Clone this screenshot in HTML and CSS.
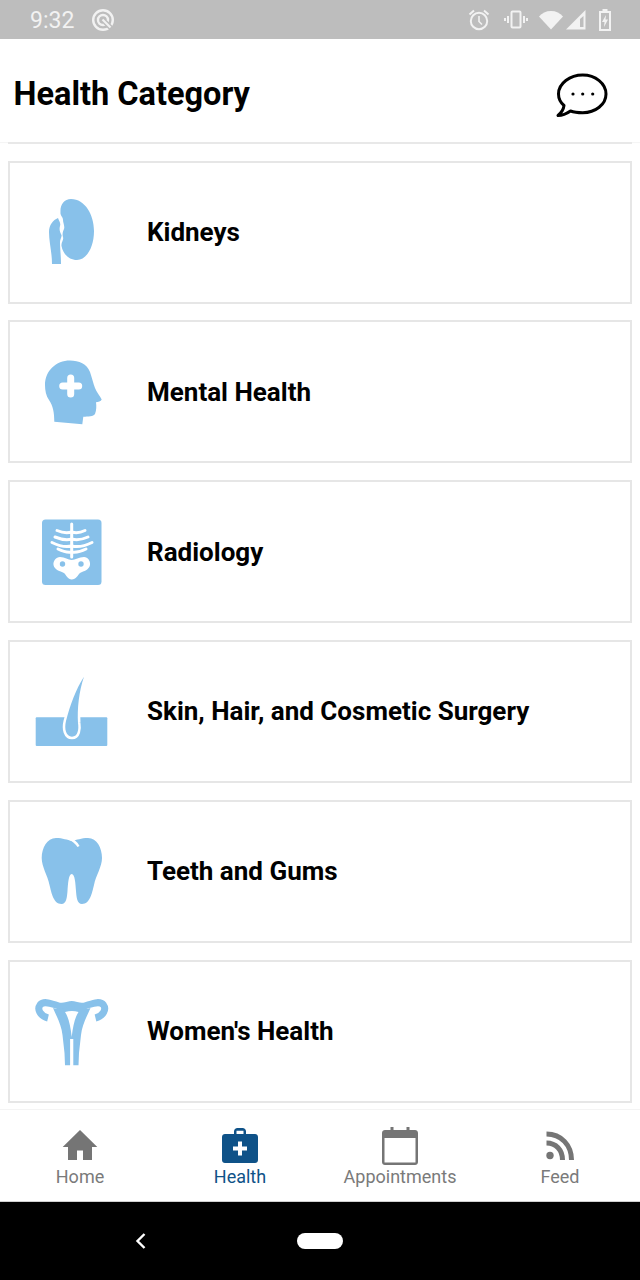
FILE: index.html
```html
<!DOCTYPE html>
<html lang="en">
<head>
  <meta charset="UTF-8" />
  <meta name="viewport" content="width=device-width, initial-scale=1.0" />
  <title>Health Category</title>
  <link rel="stylesheet" href="styles.css">
</head>
<body>
  <div class="status-bar">
    <div class="status-left">
      <span class="status-time">9:32</span>
      <svg class="status-q" width="24" height="24" viewBox="0 0 24 24" fill="none" stroke="#f2f2f2" stroke-width="2.4">
        <circle cx="12" cy="12" r="9.800"/>
        <circle cx="12" cy="12" r="5"/>
        <path d="M14 14l10 10" stroke="#bdbdbd" stroke-width="5"/>
        <path d="M11.500 11.500l8 8" stroke-width="2.200"/>
      </svg>
    </div>
    <div class="status-right">
      <svg width="24" height="24" viewBox="0 0 24 24" fill="none" stroke="#f2f2f2" stroke-width="2">
        <circle cx="12" cy="13" r="8.200"/>
        <path d="M12 8v5.500l3 3" stroke-width="1.600"/>
        <path d="M2.500 6.500L7 2.500M21.500 6.500L17 2.500"/>
      </svg>
      <svg width="24" height="24" viewBox="0 0 24 24" fill="none" stroke="#f2f2f2" stroke-width="2">
        <rect x="7.500" y="3.500" width="9" height="16" rx="1"/>
        <path d="M4 8v7M20 8v7M1 10v3M23 10v3"/>
      </svg>
      <svg class="status-wifi" width="24" height="20" viewBox="0 0 24 20">
        <path d="M0 6.500C3 3 7 1 12 1s9 2 12 5.500L12 19.500z" fill="#f2f2f2"/>
      </svg>
      <svg class="status-signal" width="20" height="20" viewBox="0 0 20 20">
        <path d="M0 19.500L19.500 0v19.500z" fill="#f2f2f2"/>
        <path d="M14 9v8h3.500V6z" fill="#bdbdbd"/>
      </svg>
      <svg class="status-battery" width="14" height="22" viewBox="0 0 14 22">
        <path d="M4.500 0h5v2h3.500v20H1V2h3.500z" fill="#f2f2f2"/>
        <rect x="3" y="4" width="8" height="16" fill="#bdbdbd"/>
        <path d="M8 6L4 13h2.500L6 18l4-7.500H7.500z" fill="#f2f2f2"/>
      </svg>
    </div>
  </div>

  <header class="top-bar">
    <h1>Health Category</h1>
    <svg class="chat-icon" width="56" height="50" viewBox="0 0 56 50" fill="none">
      <path d="M3 47.500C7.500 47.500 12 45.500 15.500 43C19 44.300 23 44.700 27.700 44.700C40.500 44.700 51 36.500 51 26C51 15.500 40.500 7 27.700 7C15 7 3.500 15.500 3.500 26C3.500 30.500 5.500 34.500 9 37.500C8.500 41.500 6 45 3 47.500Z" stroke="#000" stroke-width="3" stroke-linejoin="round"/>
      <circle cx="18" cy="26" r="1.600" fill="#000"/>
      <circle cx="27.700" cy="26" r="1.600" fill="#000"/>
      <circle cx="37.700" cy="26" r="1.600" fill="#000"/>
    </svg>
  </header>

  <main class="category-list">
    <div class="card-end"></div>

    <div class="card">
      <svg class="card-icon" viewBox="0 0 80 80">
        <path d="M39 7C53 7 62 23 62 39C62 56 54 68 45 68C37 68 31 62 29.500 54C29 50 32 48 31 45C30 42 31 39 32 37C33 34 31 31 31 28C31 25 28 24 28.500 20C28 13 32 7 39 7Z"/>
        <path d="M26 26C21 28 17 33 17 40C17 50 20 60 20 72L29 72C29 64 28 56 28 50C28 47 30 45 29.500 43C28 40 27 38 28 34C29 31 27 29 26 26Z"/>
      </svg>
      <span class="card-title">Kidneys</span>
    </div>

    <div class="card">
      <svg class="card-icon" viewBox="0 0 80 80">
        <path d="M38 8.500C47 8.500 55 12 58 20C60 26 61.500 32 63 36C64.500 40 68 44 69.700 47.500C69 49.500 66 50 64 50.300C64.500 54 64.500 58 63 62C61.500 64.500 56 64.500 51.300 64.700L50.300 72.300L22.300 69.700C22.300 60 21 54 17 48C14 44 13 38 13 33C13 19 24 8.500 38 8.500Z"/>
        <path class="icon-cut" d="M38.700 26v16M30.700 34h16"/>
      </svg>
      <span class="card-title">Mental Health</span>
    </div>

    <div class="card">
      <svg class="card-icon" viewBox="0 0 80 80">
        <rect x="10" y="7.500" width="59.500" height="65.500" rx="3.500"/>
        <path class="icon-bone" d="M39.700 12v33"/>
        <path class="icon-rib" d="M25 18.500Q33 22 39.700 20Q46 22 53 18.500"/>
        <path class="icon-rib" d="M23 25Q33 29 39.700 27Q47 29 56 25"/>
        <path class="icon-rib" d="M20 30.500Q31 36 39.700 34Q49 36 60 30.500"/>
        <path class="icon-rib" d="M26 37Q34 41 39.700 40Q46 41 54 37"/>
        <path class="icon-pelvis" d="M28 45C33 45 36 48 39.700 48C43.500 48 47 45 52 45C56 45 58.500 49 58 53C57 58 52 59 48 61C46 63 44 67.500 39.700 67.500C36 67.500 34 63 32 61C28 59 22.500 58 21.500 53C21 49 24 45 28 45Z"/>
        <circle cx="30.500" cy="52" r="2.700"/>
        <circle cx="49" cy="52" r="2.700"/>
      </svg>
      <span class="card-title">Radiology</span>
    </div>

    <div class="card">
      <svg class="card-icon" viewBox="0 0 80 80">
        <rect x="3.700" y="46.300" width="71.600" height="28.700" rx="1"/>
        <path class="icon-hair" d="M52 5.700C44 18 38 34 34 50C32 58 34 65.700 40 65.700C46 65.700 47 58 46 52C45 38 47 20 52 5.700Z"/>
      </svg>
      <span class="card-title">Skin, Hair, and Cosmetic Surgery</span>
    </div>

    <div class="card">
      <svg class="card-icon" viewBox="0 0 80 80">
        <path d="M24 7C31 7 35 9 40 10C45 9 49 7 56 7C65 7 70 17 70 27C70 36 64 44 62 54C60 62 58 73 50 73C45 73 44.500 66 44 60C43.500 53 43 43 39.700 43C36.500 43 36 53 35.500 60C35 66 34.500 73 29.500 73C21.500 73 19.500 62 17.500 54C15.500 44 9.700 36 9.700 27C9.700 17 15 7 24 7Z"/>
        <path class="icon-notch" d="M37 7.500C41 9 44.500 12 46.500 15.500"/>
      </svg>
      <span class="card-title">Teeth and Gums</span>
    </div>

    <div class="card">
      <svg class="card-icon" viewBox="0 0 80 80">
        <path class="icon-tube" d="M16 27C8 25 5 18 8 14C12 9 20 13 27 15C32 16.500 36 13.500 39.700 13.500C43.500 13.500 47.500 16.500 52.500 15C59.500 13 67.500 9 71.500 14C74.500 18 71.500 25 63.500 27"/>
        <path d="M21 17C26 19 33 18 39.700 15C46.500 18 53.500 19 58.500 17C55 25 50 34 49 44C48.500 50 47.500 56 47 62L46.500 74.300L41.300 74.300L41.300 48L38.100 48L38.100 74.300L33 74.300L32.500 62C32 56 31 50 30.500 44C29.500 34 24.500 25 21 17Z"/>
        <path class="icon-gap" d="M33 21Q40 19 46.500 21C43 26 41 35 39.700 46C38.500 35 36.500 26 33 21Z"/>
      </svg>
      <span class="card-title">Women's Health</span>
    </div>
  </main>

  <nav class="tab-bar">
    <div class="tab">
      <svg class="tab-icon" viewBox="0 0 44 44">
        <path d="M22 4L4.700 21H10V34H19V24.500H25V34H34V21H39.300Z"/>
      </svg>
      <span>Home</span>
    </div>
    <div class="tab tab-active">
      <svg class="tab-icon" viewBox="0 0 44 44">
        <path fill-rule="evenodd" d="M16 8V5.500C16 3.500 17.500 2 19.500 2H24.500C26.500 2 28 3.500 28 5.500V8H37C38.700 8 40 9.300 40 11V34C40 35.700 38.700 37 37 37H7C5.300 37 4 35.700 4 34V11C4 9.300 5.300 8 7 8ZM18.500 8H25.500V4.800H18.500Z"/>
        <path class="tab-cross" d="M22 15.500v14M15 22.500h14"/>
      </svg>
      <span>Health</span>
    </div>
    <div class="tab">
      <svg class="tab-icon" viewBox="0 0 44 44">
        <path fill-rule="evenodd" d="M7 4H12.500V1H15.500V4H28.500V1H31.500V4H37C38.700 4 40 5.300 40 7V36C40 37.700 38.700 39 37 39H7C5.300 39 4 37.700 4 36V7C4 5.300 5.300 4 7 4ZM6.500 12V36.500H37.500V12Z"/>
      </svg>
      <span>Appointments</span>
    </div>
    <div class="tab">
      <svg class="tab-icon" viewBox="0 0 44 44">
        <circle cx="12" cy="29.500" r="3.700"/>
        <path class="tab-wave" d="M8.500 17C18 17 24.500 24 24.500 34M8.500 8C23 8 33.500 19 33.500 34"/>
      </svg>
      <span>Feed</span>
    </div>
  </nav>

  <div class="system-bar">
    <svg class="back-icon" width="14" height="18" viewBox="0 0 14 18" fill="none">
      <path d="M10.500 2L3.500 9l7 7" stroke="#fff" stroke-width="2.400"/>
    </svg>
    <div class="home-pill"></div>
  </div>
</body>
</html>
```

FILE: styles.css
```css
/* Global resets and basic styling */
* {
  margin: 0;
  padding: 0;
  box-sizing: border-box;
}

body {
  font-family: Roboto, Arial, sans-serif;
  background: #fff;
  color: #000;
  display: flex;
  flex-direction: column;
  height: 1280px;
  overflow: hidden;
}

/* Status bar */
.status-bar {
  background: #bdbdbd;
  height: 39px;
  flex: none;
  display: flex;
  justify-content: space-between;
  align-items: center;
  padding: 1px 28px 0 30px;
  color: #f2f2f2;
}

.status-left,
.status-right {
  display: flex;
  align-items: center;
}

.status-time {
  font-size: 23px;
  margin-right: 17px;
}

.status-right svg {
  margin-left: 13px;
}

.status-right .status-wifi {
  margin-left: 11px;
}

.status-right .status-signal {
  margin-left: 3px;
}

.status-right .status-battery {
  margin-left: 12px;
}

/* Header */
.top-bar {
  height: 103px;
  flex: none;
  display: flex;
  justify-content: space-between;
  align-items: center;
  padding: 6px 29px 0 13.5px;
  box-shadow: 0 1px 1px rgba(0, 0, 0, 0.04);
}

.top-bar h1 {
  font-size: 32.5px;
  font-weight: 700;
}

.chat-icon {
  margin-top: -1px;
}

/* Category list */
.category-list {
  flex: 1;
  padding: 0 8px;
  overflow: hidden;
}

.card-end {
  height: 2px;
  background: #e8e8e8;
  margin-bottom: 16.6px;
}

.card {
  height: 143px;
  border: 2px solid #e6e6e6;
  margin-bottom: 16.8px;
  display: flex;
  align-items: center;
  padding-left: 22px;
}

.card-icon {
  width: 80px;
  height: 80px;
  flex: none;
  margin-right: 35px;
  fill: #88c1ea;
}

.card-title {
  font-size: 26px;
  font-weight: 700;
}

.icon-cut {
  fill: none;
  stroke: #fff;
  stroke-width: 7;
  stroke-linecap: round;
}

.icon-bone,
.icon-rib {
  fill: none;
  stroke: #fff;
  stroke-linecap: round;
}

.icon-bone {
  stroke-width: 3;
}

.icon-rib {
  stroke-width: 3;
}

.icon-pelvis {
  fill: #fff;
}

.icon-hair {
  stroke: #fff;
  stroke-width: 5;
  paint-order: stroke;
}

.icon-notch {
  fill: none;
  stroke: #fff;
  stroke-width: 2.5;
}

.icon-tube {
  fill: none;
  stroke: #88c1ea;
  stroke-width: 7;
}

.icon-gap {
  fill: #fff;
}

/* Bottom tabs */
.tab-bar {
  height: 93px;
  flex: none;
  display: grid;
  grid-template-columns: repeat(4, 1fr);
  border-top: 1px solid #f4f4f4;
  border-bottom: 1px solid #d0d0d0;
  background: #fff;
}

.tab {
  display: flex;
  flex-direction: column;
  align-items: center;
  color: #7a7a7a;
  font-size: 18px;
  padding-top: 16px;
}

.tab-icon {
  width: 44px;
  height: 44px;
  fill: #757575;
  margin-bottom: -4px;
}

.tab-active {
  color: #0f5288;
}

.tab-active .tab-icon {
  fill: #0f5288;
}

.tab-cross {
  fill: none;
  stroke: #fff;
  stroke-width: 4;
}

.tab-wave {
  fill: none;
  stroke: #757575;
  stroke-width: 5;
}

/* Android navigation bar */
.system-bar {
  height: 78px;
  flex: none;
  background: #000;
  display: flex;
  align-items: center;
  padding-left: 134px;
}

.back-icon {
  margin-right: 149px;
}

.home-pill {
  width: 46px;
  height: 16px;
  border-radius: 8px;
  background: #fff;
}
```
